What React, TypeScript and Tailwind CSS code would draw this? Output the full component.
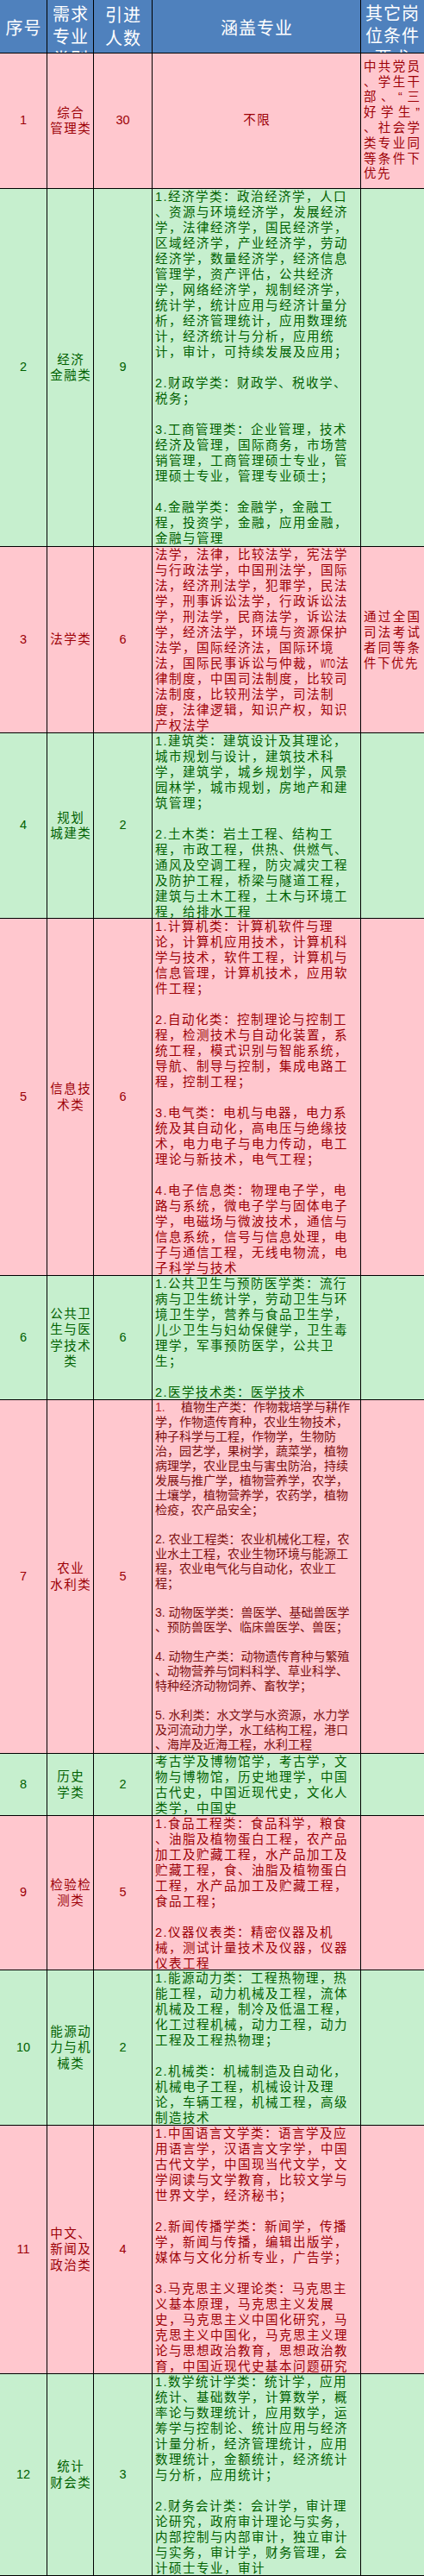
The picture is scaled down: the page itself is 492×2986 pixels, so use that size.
import React from 'react';

type Side = { lines: string[]; last: string; lh: string };
type RowData = {
  n: string;
  name: string[];
  count: string;
  h: string;
  green: boolean;
  lines?: string[];
  center?: string;
  side?: Side;
  alt?: boolean;
};

const rows: RowData[] = [
  {
    n: '1',
    name: ['综合', '管理类'],
    count: '30',
    h: 'h-[157px]',
    green: false,
    center: '不限',
    side: {
      lines: ['中共党员', '、学生干', '部、“三', '好学生”', '、社会学', '类专业同', '等条件下'],
      last: '优先',
      lh: 'h-[17.8px] leading-[17.8px]',
    },
  },
  {
    n: '2',
    name: ['经济', '金融类'],
    count: '9',
    h: 'h-[415px]',
    green: true,
    lines: [
      '1.经济学类：政治经济学，人口',
      '、资源与环境经济学，发展经济',
      '学，法律经济学，国民经济学，',
      '区域经济学，产业经济学，劳动',
      '经济学，数量经济学，经济信息',
      '管理学，资产评估，公共经济',
      '学，网络经济学，规制经济学，',
      '统计学，统计应用与经济计量分',
      '析，经济管理统计，应用数理统',
      '计，经济统计与分析，应用统',
      '计，审计，可持续发展及应用；',
      '',
      '2.财政学类：财政学、税收学、',
      '税务；',
      '',
      '3.工商管理类：企业管理，技术',
      '经济及管理，国际商务，市场营',
      '销管理，工商管理硕士专业，管',
      '理硕士专业，管理专业硕士；',
      '',
      '4.金融学类：金融学，金融工',
      '程，投资学，金融，应用金融，',
      '金融与管理',
    ],
  },
  {
    n: '3',
    name: ['法学类'],
    count: '6',
    h: 'h-[216px]',
    green: false,
    lines: [
      '法学，法律，比较法学，宪法学',
      '与行政法学，中国刑法学，国际',
      '法，经济刑法学，犯罪学，民法',
      '学，刑事诉讼法学，行政诉讼法',
      '学，刑法学，民商法学，诉讼法',
      '学，经济法学，环境与资源保护',
      '法学，国际经济法，国际环境',
      '@',
      '律制度，中国司法制度，比较司',
      '法制度，比较刑法学，司法制',
      '度，法律逻辑，知识产权，知识',
      '产权法学',
    ],
    side: {
      lines: ['通过全国', '司法考试', '者同等条'],
      last: '件下优先',
      lh: 'h-[18px] leading-[18px]',
    },
  },
  {
    n: '4',
    name: ['规划', '城建类'],
    count: '2',
    h: 'h-[215px]',
    green: true,
    lines: [
      '1.建筑类：建筑设计及其理论，',
      '城市规划与设计，建筑技术科',
      '学，建筑学，城乡规划学，风景',
      '园林学，城市规划，房地产和建',
      '筑管理；',
      '',
      '2.土木类：岩土工程、结构工',
      '程，市政工程，供热、供燃气、',
      '通风及空调工程，防灾减灾工程',
      '及防护工程，桥梁与隧道工程，',
      '建筑与土木工程，土木与环境工',
      '程，给排水工程',
    ],
  },
  {
    n: '5',
    name: ['信息技', '术类'],
    count: '6',
    h: 'h-[414px]',
    green: false,
    lines: [
      '1.计算机类：计算机软件与理',
      '论，计算机应用技术，计算机科',
      '学与技术，软件工程，计算机与',
      '信息管理，计算机技术，应用软',
      '件工程；',
      '',
      '2.自动化类：控制理论与控制工',
      '程，检测技术与自动化装置，系',
      '统工程，模式识别与智能系统，',
      '导航、制导与控制，集成电路工',
      '程，控制工程；',
      '',
      '3.电气类：电机与电器，电力系',
      '统及其自动化，高电压与绝缘技',
      '术，电力电子与电力传动，电工',
      '理论与新技术，电气工程；',
      '',
      '4.电子信息类：物理电子学，电',
      '路与系统，微电子学与固体电子',
      '学，电磁场与微波技术，通信与',
      '信息系统，信号与信息处理，电',
      '子与通信工程，无线电物流，电',
      '子科学与技术',
    ],
  },
  {
    n: '6',
    name: ['公共卫', '生与医', '学技术', '类'],
    count: '6',
    h: 'h-[144px]',
    green: true,
    lines: [
      '1.公共卫生与预防医学类：流行',
      '病与卫生统计学，劳动卫生与环',
      '境卫生学，营养与食品卫生学，',
      '儿少卫生与妇幼保健学，卫生毒',
      '理学，军事预防医学，公共卫',
      '生；',
      '',
      '2.医学技术类：医学技术',
    ],
  },
  {
    n: '7',
    name: ['农业', '水利类'],
    count: '5',
    h: 'h-[410px]',
    green: false,
    alt: true,
    lines: [
      '#植物生产类：作物栽培学与耕作',
      '学，作物遗传育种，农业生物技术，',
      '种子科学与工程，作物学，生物防',
      '治，园艺学，果树学，蔬菜学，植物',
      '病理学，农业昆虫与害虫防治，持续',
      '发展与推广学，植物营养学，农学，',
      '土壤学，植物营养学，农药学，植物',
      '检疫，农产品安全；',
      '',
      '2. 农业工程类：农业机械化工程，农',
      '业水土工程，农业生物环境与能源工',
      '程，农业电气化与自动化，农业工',
      '程；',
      '',
      '3. 动物医学类：兽医学、基础兽医学',
      '、预防兽医学、临床兽医学、兽医；',
      '',
      '4. 动物生产类：动物遗传育种与繁殖',
      '、动物营养与饲料科学、草业科学、',
      '特种经济动物饲养、畜牧学；',
      '',
      '5. 水利类：水文学与水资源，水力学',
      '及河流动力学，水工结构工程，港口',
      '、海岸及近海工程，水利工程',
    ],
  },
  {
    n: '8',
    name: ['历史', '学类'],
    count: '2',
    h: 'h-[72px]',
    green: true,
    lines: [
      '考古学及博物馆学，考古学，文',
      '物与博物馆，历史地理学，中国',
      '古代史，中国近现代史，文化人',
      '类学，中国史',
    ],
  },
  {
    n: '9',
    name: ['检验检', '测类'],
    count: '5',
    h: 'h-[179px]',
    green: false,
    lines: [
      '1.食品工程类：食品科学，粮食',
      '、油脂及植物蛋白工程，农产品',
      '加工及贮藏工程，水产品加工及',
      '贮藏工程，食、油脂及植物蛋白',
      '工程，水产品加工及贮藏工程，',
      '食品工程；',
      '',
      '2.仪器仪表类：精密仪器及机',
      '械，测试计量技术及仪器，仪器',
      '仪表工程',
    ],
  },
  {
    n: '10',
    name: ['能源动', '力与机', '械类'],
    count: '2',
    h: 'h-[180px]',
    green: true,
    lines: [
      '1.能源动力类：工程热物理，热',
      '能工程，动力机械及工程，流体',
      '机械及工程，制冷及低温工程，',
      '化工过程机械，动力工程，动力',
      '工程及工程热物理；',
      '',
      '2.机械类：机械制造及自动化，',
      '机械电子工程，机械设计及理',
      '论，车辆工程，机械工程，高级',
      '制造技术',
    ],
  },
  {
    n: '11',
    name: ['中文、', '新闻及', '政治类'],
    count: '4',
    h: 'h-[288px]',
    green: false,
    lines: [
      '1.中国语言文学类：语言学及应',
      '用语言学，汉语言文字学，中国',
      '古代文学，中国现当代文学，文',
      '学阅读与文学教育，比较文学与',
      '世界文学，经济秘书；',
      '',
      '2.新闻传播学类：新闻学，传播',
      '学，新闻与传播，编辑出版学，',
      '媒体与文化分析专业，广告学；',
      '',
      '3.马克思主义理论类：马克思主',
      '义基本原理，马克思主义发展',
      '史，马克思主义中国化研究，马',
      '克思主义中国化，马克思主义理',
      '论与思想政治教育，思想政治教',
      '育，中国近现代史基本问题研究',
    ],
  },
  {
    n: '12',
    name: ['统计', '财会类'],
    count: '3',
    h: 'h-[234px]',
    green: true,
    lines: [
      '1.数学统计学类：统计学，应用',
      '统计、基础数学，计算数学，概',
      '率论与数理统计，应用数学，运',
      '筹学与控制论、统计应用与经济',
      '计量分析，经济管理统计，应用',
      '数理统计，金额统计，经济统计',
      '与分析，应用统计；',
      '',
      '2.财务会计类：会计学，审计理',
      '论研究，政府审计理论与实务，',
      '内部控制与内部审计，独立审计',
      '与实务，审计学，财务管理，会',
      '计硕士专业，审计',
    ],
  },
];

function Lines({ lines, alt }: { lines: string[]; alt?: boolean }) {
  if (alt) {
    return (
      <div className="pl-[3px] text-[14px] leading-[17px] tracking-normal text-[#7d1010]">
        {lines.map((l, i) => (
          <div key={i} className="h-[17px] whitespace-nowrap">
            {l.startsWith('#') ? (
              <>
                <span className="inline-block w-[30px] text-[#c0282d]">1.</span>
                {l.slice(1)}
              </>
            ) : (
              l
            )}
          </div>
        ))}
      </div>
    );
  }
  return (
    <div className="pl-[3px] text-[14.5px] leading-[18px] tracking-[1.5px]">
      {lines.map((l, i) => (
        <div key={i} className="h-[18px] whitespace-nowrap">
          {l === '@' ? (
            <>
              法，国际民事诉讼与仲裁，
              <span className="inline-block w-[18px] tracking-normal align-top">
                <span className="inline-block origin-left scale-x-50">WTO</span>
              </span>
              法
            </>
          ) : (
            l
          )}
        </div>
      ))}
    </div>
  );
}

function SideText({ side }: { side: Side }) {
  return (
    <div className="text-[14.5px]">
      {side.lines.map((l, i) => (
        <div key={i} className={`flex justify-between ${side.lh}`}>
          {Array.from(l).map((c, j) => (
            <span key={j}>{c}</span>
          ))}
        </div>
      ))}
      <div className={`tracking-[1.5px] whitespace-nowrap ${side.lh}`}>{side.last}</div>
    </div>
  );
}

function Row({ r }: { r: RowData }) {
  const color = r.green ? 'bg-[#c6efce] text-[#006100]' : 'bg-[#ffc7ce] text-[#9c0006]';
  return (
    <div className={`flex border-b border-black ${r.h} ${color}`}>
      <div className="w-[55px] shrink-0 border-r border-black flex items-center justify-center text-[14.5px]">
        {r.n}
      </div>
      <div className="w-[54px] shrink-0 border-r border-black flex flex-col items-center justify-center text-[14.5px] leading-[18.3px] tracking-[1.5px] pl-[1.5px]">
        {r.name.map((s, i) => (
          <div key={i} className="whitespace-nowrap">
            {s}
          </div>
        ))}
      </div>
      <div className="w-[68px] shrink-0 border-r border-black flex items-center justify-center text-[14.5px]">
        {r.count}
      </div>
      <div className="w-[242px] shrink-0 border-r border-black overflow-hidden">
        {r.center ? (
          <div className="h-full flex items-center justify-center text-[14.5px] tracking-[1.5px] pl-[1.5px]">
            {r.center}
          </div>
        ) : (
          <Lines lines={r.lines || []} alt={r.alt} />
        )}
      </div>
      <div className="flex-1 min-w-0 pl-[3px] pr-[5px] flex flex-col justify-center overflow-hidden">
        {r.side ? <SideText side={r.side} /> : null}
      </div>
    </div>
  );
}

export default function App() {
  return (
    <div className="w-[492px] font-['Liberation_Sans','Noto_Sans_CJK_SC',sans-serif]">
      <div className="flex h-[62px] border-b border-black bg-[#4f81bd] text-white text-[20px] leading-[26px] tracking-[1px]">
        <div className="w-[55px] shrink-0 border-r border-black flex items-center justify-center pt-[5px] pl-[1px]">
          序号
        </div>
        <div className="w-[54px] shrink-0 border-r border-black flex flex-col items-center pt-[4px] pl-[1px] overflow-hidden">
          <div className="whitespace-nowrap">需求</div>
          <div className="whitespace-nowrap">专业</div>
          <div className="whitespace-nowrap">类别</div>
        </div>
        <div className="w-[68px] shrink-0 border-r border-black flex flex-col items-center pt-[5px] pl-[1px] leading-[27px] overflow-hidden">
          <div className="whitespace-nowrap">引进</div>
          <div className="whitespace-nowrap">人数</div>
        </div>
        <div className="w-[242px] shrink-0 border-r border-black flex items-center justify-center pt-[5px] pl-[1px]">
          涵盖专业
        </div>
        <div className="flex-1 min-w-0 flex flex-col items-center pt-[3px] overflow-hidden">
          <div className="whitespace-nowrap">其它岗</div>
          <div className="whitespace-nowrap">位条件</div>
          <div className="whitespace-nowrap">要求</div>
        </div>
      </div>
      {rows.map((r) => (
        <Row key={r.n} r={r} />
      ))}
    </div>
  );
}
